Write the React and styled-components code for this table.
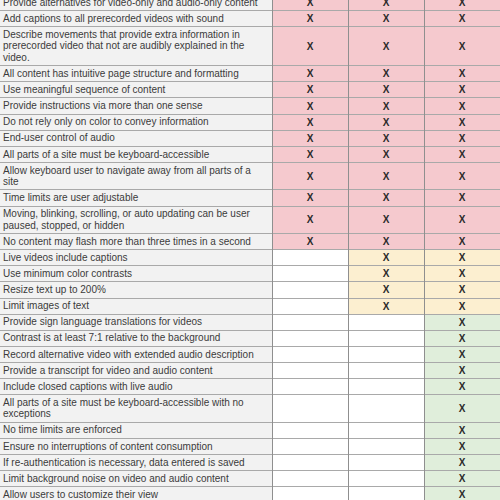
import React from 'react';
import styled, { createGlobalStyle } from 'styled-components';

const GlobalStyle = createGlobalStyle`
  html, body {
    margin: 0;
    padding: 0;
    background: #ffffff;
    overflow: hidden;
  }
`;

const Page = styled.div`
  width: 500px;
  height: 500px;
  overflow: hidden;
  font-family: "Liberation Sans", Arial, sans-serif;
`;

const Table = styled.table`
  width: 500px;
  margin-top: -5px;
  border-collapse: collapse;
  table-layout: fixed;
`;

const Col = styled.col`
  width: ${(p) => p.$w}px;
`;

const Row = styled.tr`
  border-bottom: 1px solid #a9a9a9;
`;

const Desc = styled.td`
  background: #f2f2f2;
  color: #3b3b3b;
  font-size: 10px;
  line-height: 11.5px;
  padding: 1.8px 3px 1.8px 3px;
  vertical-align: middle;
  border-right: 1px solid #8f8f8f;
`;

const fills = {
  A: '#f5c9ce',
  AA: '#fcefd0',
  AAA: '#e0eedb',
};

const Mark = styled.td`
  background: ${(p) => (p.$on ? fills[p.$level] : '#ffffff')};
  color: #2b2b2b;
  font-size: 10px;
  font-weight: bold;
  text-align: center;
  vertical-align: middle;
  padding: 0;
  border-right: 1px solid #8f8f8f;
`;

const rows = [
  ['Provide alternatives for video-only and audio-only content', 'A'],
  ['Add captions to all prerecorded videos with sound', 'A'],
  ['Describe movements that provide extra information in prerecorded video that not are audibly explained in the video.', 'A'],
  ['All content has intuitive page structure and formatting', 'A'],
  ['Use meaningful sequence of content', 'A'],
  ['Provide instructions via more than one sense', 'A'],
  ['Do not rely only on color to convey information', 'A'],
  ['End-user control of audio', 'A'],
  ['All parts of a site must be keyboard-accessible', 'A'],
  ['Allow keyboard user to navigate away from all parts of a site', 'A'],
  ['Time limits are user adjustable', 'A'],
  ['Moving, blinking, scrolling, or auto updating can be user paused, stopped, or hidden', 'A'],
  ['No content may flash more than three times in a second', 'A'],
  ['Live videos include captions', 'AA'],
  ['Use minimum color contrasts', 'AA'],
  ['Resize text up to 200%', 'AA'],
  ['Limit images of text', 'AA'],
  ['Provide sign language translations for videos', 'AAA'],
  ['Contrast is at least 7:1 relative to the background', 'AAA'],
  ['Record alternative video with extended audio description', 'AAA'],
  ['Provide a transcript for video and audio content', 'AAA'],
  ['Include closed captions with live audio', 'AAA'],
  ['All parts of a site must be keyboard-accessible with no exceptions', 'AAA'],
  ['No time limits are enforced', 'AAA'],
  ['Ensure no interruptions of content consumption', 'AAA'],
  ['If re-authentication is necessary, data entered is saved', 'AAA'],
  ['Limit background noise on video and audio content', 'AAA'],
  ['Allow users to customize their view', 'AAA'],
];

const levelIndex = { A: 0, AA: 1, AAA: 2 };

const App = () => {
  return (
    <Page>
      <GlobalStyle />
      <Table>
        <colgroup>
          <Col $w={272} />
          <Col $w={76} />
          <Col $w={76} />
          <Col $w={76} />
        </colgroup>
        <tbody>
          {rows.map(([text, level]) => (
            <Row key={text}>
              <Desc>{text}</Desc>
              {[0, 1, 2].map((i) => {
                const on = i >= levelIndex[level];
                return (
                  <Mark key={i} $on={on} $level={level}>
                    {on ? 'X' : ''}
                  </Mark>
                );
              })}
            </Row>
          ))}
        </tbody>
      </Table>
    </Page>
  );
};

export default App;
